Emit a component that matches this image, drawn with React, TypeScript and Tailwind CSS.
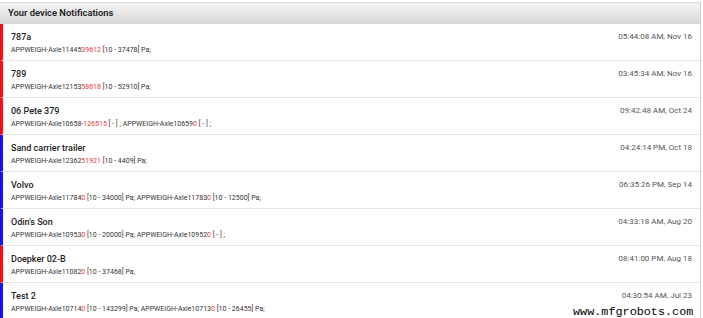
import React from 'react';

type Part = { text: string; red?: boolean };
type Note = { name: string; parts: Part[]; time: string; color: 'red' | 'blue' };

const notes: Note[] = [
  {
    name: '787a',
    parts: [{ text: 'APPWEIGH-Axle11445' }, { text: '39612', red: true }, { text: ' [10 - 37478] Pa;' }],
    time: '05:44:08 AM, Nov 16',
    color: 'red',
  },
  {
    name: '789',
    parts: [{ text: 'APPWEIGH-Axle12153' }, { text: '58618', red: true }, { text: ' [10 - 52910] Pa;' }],
    time: '03:45:34 AM, Nov 16',
    color: 'red',
  },
  {
    name: '06 Pete 379',
    parts: [
      { text: 'APPWEIGH-Axle10658-' },
      { text: '126515', red: true },
      { text: ' [ - ] ; APPWEIGH-Axle10659' },
      { text: '0', red: true },
      { text: ' [ - ] ;' },
    ],
    time: '09:42:48 AM, Oct 24',
    color: 'red',
  },
  {
    name: 'Sand carrier trailer',
    parts: [{ text: 'APPWEIGH-Axle12362' }, { text: '51921', red: true }, { text: ' [10 - 4409] Pa;' }],
    time: '04:24:14 PM, Oct 18',
    color: 'blue',
  },
  {
    name: 'Volvo',
    parts: [
      { text: 'APPWEIGH-Axle11784' },
      { text: '0', red: true },
      { text: ' [10 - 34000] Pa; APPWEIGH-Axle11783' },
      { text: '0', red: true },
      { text: ' [10 - 12500] Pa;' },
    ],
    time: '06:35:26 PM, Sep 14',
    color: 'blue',
  },
  {
    name: "Odin's Son",
    parts: [
      { text: 'APPWEIGH-Axle10953' },
      { text: '0', red: true },
      { text: ' [10 - 20000] Pa; APPWEIGH-Axle10952' },
      { text: '0', red: true },
      { text: ' [ - ] ;' },
    ],
    time: '04:33:18 AM, Aug 20',
    color: 'blue',
  },
  {
    name: 'Doepker 02-B',
    parts: [{ text: 'APPWEIGH-Axle11082' }, { text: '0', red: true }, { text: ' [10 - 37468] Pa;' }],
    time: '08:41:00 PM, Aug 18',
    color: 'red',
  },
  {
    name: 'Test 2',
    parts: [
      { text: 'APPWEIGH-Axle10714' },
      { text: '0', red: true },
      { text: ' [10 - 143299] Pa; APPWEIGH-Axle10713' },
      { text: '0', red: true },
      { text: ' [10 - 26455] Pa;' },
    ],
    time: '04:30:54 AM, Jul 23',
    color: 'blue',
  },
];

export default function App() {
  return (
    <div className="relative w-[703px] h-[318px] overflow-hidden bg-white pt-[2px] font-['Roboto',sans-serif]">
      <div className="w-[701px] border-r border-[#cfcfcf] h-full">
        <div className="h-[22px] flex items-center pl-[8px] border-t border-b border-[#d6d6d6] bg-gradient-to-b from-[#f4f4f4] to-[#d9d9d9]">
          <span className="text-[9.4px] font-semibold text-[#222]">Your device Notifications</span>
        </div>
        {notes.map((n) => (
          <div
            key={n.name}
            className={`h-[37px] flex justify-between border-b border-[#e6e6e6] border-l-[3px] pl-[8px] pr-[8px] pt-[7px] ${
              n.color === 'red' ? 'border-l-[#e8141c]' : 'border-l-[#1c14dc]'
            }`}
          >
            <div className="flex flex-col">
              <span className="text-[9px] leading-[12px] font-medium text-[#222]">{n.name}</span>
              <span className="text-[7px] leading-[14px] text-[#333]">
                {n.parts.map((p, i) => (
                  <span key={i} className={p.red ? 'text-[#e53935]' : ''}>
                    {p.text}
                  </span>
                ))}
              </span>
            </div>
            <span className="text-[8px] leading-[12px] text-[#555]">{n.time}</span>
          </div>
        ))}
      </div>
      <div className="absolute left-[573px] top-[305px] text-[11.8px] leading-[14px] text-black font-['Liberation_Mono',monospace]">
        www.mfgrobots.com
      </div>
    </div>
  );
}
